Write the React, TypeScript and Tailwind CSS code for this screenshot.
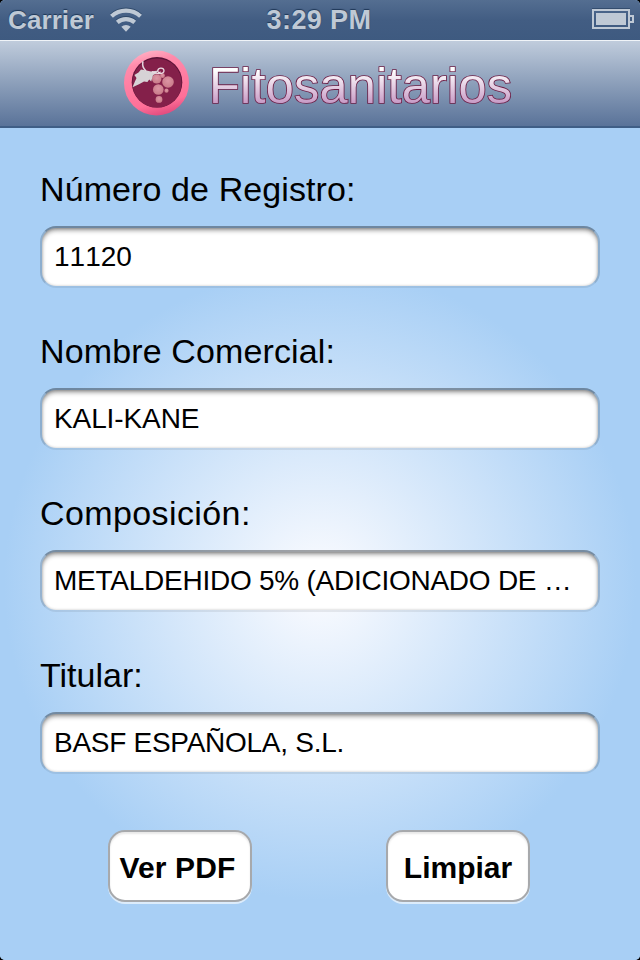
import React, { useState } from 'react';

interface FieldProps {
  id: string;
  label: string;
  value: string;
  onChange: (value: string) => void;
  labelClass?: string;
  inputClass?: string;
}

const Field: React.FC<FieldProps> = ({ id, label, value, onChange, labelClass = '', inputClass = '' }) => (
  <div className="h-[162px]">
    <label htmlFor={id} className={`block h-[62px] pt-[5px] text-[34px] leading-[40px] text-black ${labelClass}`}>
      {label}
    </label>
    <div className="h-[62px] rounded-[16px] bg-white border-2 border-t-[#00000058] border-x-[#00000028] border-b-[#00000012] bg-clip-padding shadow-[inset_0_3px_5px_-1px_#00000075,inset_0_0_3px_#00000030]">
      <input
        id={id}
        type="text"
        value={value}
        onChange={(e) => onChange(e.target.value)}
        className={`block w-full h-[58px] pl-3 pr-6 bg-transparent text-[28px] leading-[58px] text-black text-ellipsis outline-none ${inputClass}`}
      />
    </div>
  </div>
);

interface ButtonProps {
  onClick?: () => void;
  className?: string;
  children: React.ReactNode;
}

const Button: React.FC<ButtonProps> = ({ onClick, className = '', children }) => (
  <button
    type="button"
    onClick={onClick}
    className={`w-[144px] h-[72px] rounded-[17px] border-2 border-[#a7a9ac] bg-white pt-[3px] text-[30px] leading-[36px] font-bold text-black whitespace-nowrap shadow-[0_2px_0_#ffffff99,inset_0_2px_2px_#00000018] ${className}`}
  >
    {children}
  </button>
);

const StatusBar: React.FC = () => (
  <div className="flex h-10 items-center justify-between bg-linear-to-b from-[#546e91] via-[#425d83] to-[#3e5a80] text-[26px] leading-[40px] font-bold text-[#bfc9d5] [text-shadow:0_-1px_1px_#1f3757]">
    <div className="flex w-[200px] items-center pl-[8px]">
      <span className="tracking-[0.1px]">Carrier</span>
      <svg className="ml-[15px] mt-[-1px] h-[26px] w-[34px]" viewBox="0 0 34 26" fill="none">
        <g stroke="#203957" strokeOpacity="0.6" transform="translate(0 -1)">
          <path d="M2.5 9.2A21.5 21.5 0 0 1 31.5 9.2" strokeWidth="4" />
          <path d="M8.3 15.3A13.4 13.4 0 0 1 25.7 15.3" strokeWidth="4" />
        </g>
        <g stroke="#bfc9d5" strokeWidth="4.2">
          <path d="M2.5 9.2A21.5 21.5 0 0 1 31.5 9.2" />
          <path d="M8.3 15.3A13.4 13.4 0 0 1 25.7 15.3" />
        </g>
        <path d="M12.3 19.7A7 7 0 0 1 21.7 19.7L17 24.7Z" fill="#bfc9d5" />
      </svg>
    </div>
    <span className="pr-[2px] text-[27px] tracking-[0.4px]">3:29 PM</span>
    <div className="flex w-[200px] justify-end pr-[6px]">
      <svg className="mt-[-2px] h-[22px] w-[43px]" viewBox="0 0 43 22" fill="none">
        <path d="M2 1H38V20H2Z" stroke="#203957" strokeOpacity="0.55" strokeWidth="2" />
        <path d="M2 2H38V20H2Z" stroke="#bfc9d5" strokeWidth="2" />
        <path d="M39 8H42V14H39" stroke="#bfc9d5" strokeWidth="2" />
        <rect x="5" y="5" width="30" height="12" fill="#bfc9d5" />
      </svg>
    </div>
  </div>
);

const GrapeLogo: React.FC = () => (
  <svg className="h-[66px] w-[66px]" viewBox="0 0 66 66">
    <defs>
      <linearGradient id="ring" x1="0.35" y1="0" x2="0.6" y2="1">
        <stop offset="0" stopColor="#ffb0c4" />
        <stop offset="0.18" stopColor="#ff8bab" />
        <stop offset="0.8" stopColor="#ff6f98" />
        <stop offset="1" stopColor="#e04a7d" />
      </linearGradient>
      <radialGradient id="grape" cx="0.5" cy="0.4" r="0.6">
        <stop offset="0" stopColor="#dc95a4" />
        <stop offset="1" stopColor="#c87a88" />
      </radialGradient>
    </defs>
    <circle cx="33.5" cy="33" r="32.5" fill="url(#ring)" />
    <circle cx="34" cy="32.3" r="25.3" fill="#5c1236" />
    <circle cx="34" cy="33" r="24.6" fill="#84204a" />
    <g fill="url(#grape)">
      <circle cx="33.7" cy="28.9" r="4.7" />
      <circle cx="39.5" cy="25.7" r="2.4" />
      <circle cx="45" cy="32" r="5.8" />
      <circle cx="35.3" cy="39.5" r="5.3" />
      <circle cx="43.5" cy="40.7" r="2.1" />
      <circle cx="36" cy="49.4" r="3.4" />
    </g>
    <path
      d="M9.5 37.3L11.6 32.2L13.5 28L11.4 25L15.5 22.6L18 19.6L23.5 20.6L28 21.6L35.5 20.6L33 23.6L30 25.2L28.2 31.6L26.2 29.4L24.4 32L21 31.6L16 34.2Z"
      fill="#d7d3d6"
    />
    <path d="M20 11.3C19 15 19.6 18 23 21" fill="none" stroke="#e4d6de" strokeWidth="1.5" />
    <path
      d="M29 21.6C33 24 41.3 24.6 41 20.8C40.7 17.4 35.5 17.4 34.8 20.4C34.4 22.6 37 23.4 37.4 21.6"
      fill="none"
      stroke="#ead9e1"
      strokeWidth="1.3"
    />
  </svg>
);

const NavBar: React.FC = () => (
  <div className="flex h-[88px] items-start border-t border-b-2 border-t-[#f0f4f8] border-b-[#3f5e86] bg-linear-to-b from-[#c0ccdc] via-[#8c9fba] to-[#5a7399] pl-[123px] pt-[9px]">
    <GrapeLogo />
    <svg className="mt-[6px] ml-[17px] h-[60px] w-[312px]" viewBox="0 0 312 60">
      <defs>
        <linearGradient id="title" gradientUnits="userSpaceOnUse" x1="0" y1="11" x2="0" y2="48">
          <stop offset="0.1" stopColor="#ffffff" />
          <stop offset="1" stopColor="#c698c4" />
        </linearGradient>
      </defs>
      <text
        x="3"
        y="46.5"
        fontSize="50.5"
        textLength="303"
        fill="url(#title)"
        stroke="#6b1a42"
        strokeWidth="1.7"
        paintOrder="stroke"
      >
        Fitosanitarios
      </text>
    </svg>
  </div>
);

const emptyForm = { registro: '', nombre: '', composicion: '', titular: '' };

const App: React.FC = () => {
  const [form, setForm] = useState({
    registro: '11120',
    nombre: 'KALI-KANE',
    composicion: 'METALDEHIDO 5% (ADICIONADO DE …',
    titular: 'BASF ESPAÑOLA, S.L.',
  });

  const update = (key: keyof typeof emptyForm) => (value: string) => {
    setForm(prev => ({ ...prev, [key]: value }));
  };

  return (
    <div className="w-[640px] h-[960px] overflow-hidden bg-black font-['Liberation_Sans',Arial,sans-serif]">
      <div className="h-full overflow-hidden rounded-[5px] bg-[#a8cff5]">
        <StatusBar />
        <NavBar />
        <main className="h-[832px] bg-[radial-gradient(circle_at_320px_456px,#fcfcff_0px,#a8cff5_316px)] px-10 pt-[36px]">
          <Field
            id="registro"
            label="Número de Registro:"
            value={form.registro}
            onChange={update('registro')}
            labelClass="tracking-[0.1px]"
            inputClass="[font-kerning:none]"
          />
          <Field
            id="nombre"
            label="Nombre Comercial:"
            value={form.nombre}
            onChange={update('nombre')}
            labelClass="tracking-[0.13px]"
            inputClass="tracking-[-0.1px]"
          />
          <Field
            id="composicion"
            label="Composición:"
            value={form.composicion}
            onChange={update('composicion')}
            labelClass="tracking-[0.4px]"
            inputClass="tracking-[-0.25px]"
          />
          <Field
            id="titular"
            label="Titular:"
            value={form.titular}
            onChange={update('titular')}
            inputClass="tracking-[-0.27px]"
          />
          <div className="flex justify-between pt-[18px] pl-[68px] pr-[70px]">
            <Button className="pr-[9px] pl-[4px] tracking-[0.15px]">Ver PDF</Button>
            <Button onClick={() => setForm(emptyForm)}>Limpiar</Button>
          </div>
        </main>
      </div>
    </div>
  );
};

export default App;
